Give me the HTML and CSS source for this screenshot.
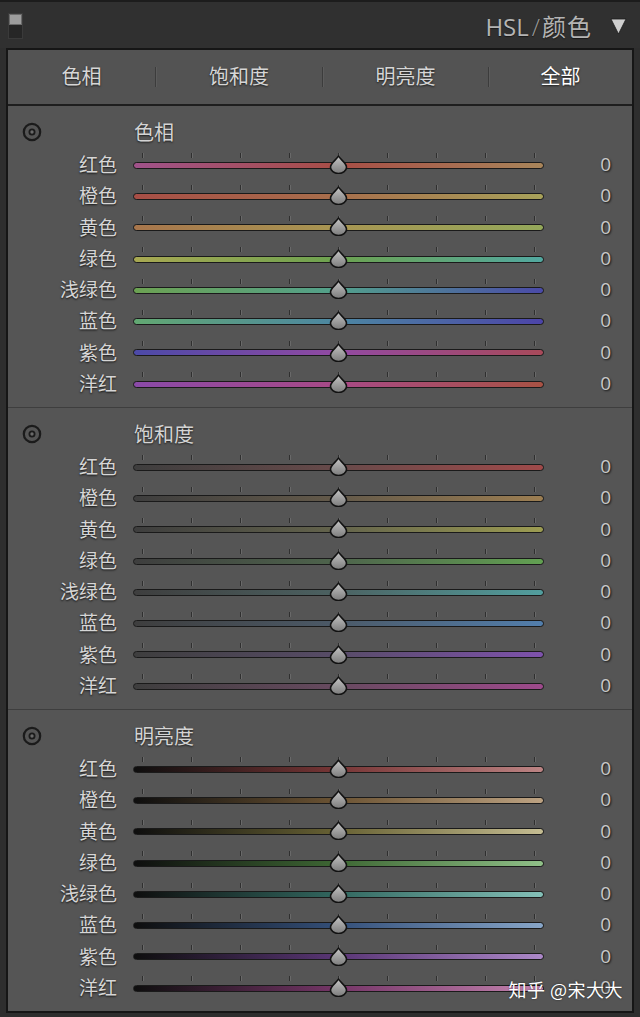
FILE: index.html
```html
<!DOCTYPE html>
<html lang="zh">
<head>
<meta charset="utf-8">
<title>HSL / 颜色</title>
<link rel="stylesheet" href="styles.css">
</head>
<body>
<div class="app">
  <div class="header">
    <div class="switch"><span class="switch-top"></span></div>
    <div class="title"><span>HSL</span><span class="slash">/</span><span>颜色</span></div>
    <svg class="collapse" width="17" height="18" viewBox="0 0 17 18"><polygon points="1,2 16,2 8.5,17" fill="#cfcfcf" stroke="#1a1a1a" stroke-width="0.8"/></svg>
  </div>
  <div class="panel">
    <div class="tabs">
      <div class="tab t1">色相</div><div class="sep"></div>
      <div class="tab t2">饱和度</div><div class="sep"></div>
      <div class="tab t3">明亮度</div><div class="sep"></div>
      <div class="tab t4 active">全部</div>
    </div>
    <div id="sections"></div>
  </div>
  <div class="watermark">知乎 @宋大大</div>
</div>
<script src="app.js"></script>
</body>
</html>
```
FILE: styles.css
```css
* { box-sizing: border-box; }
html, body { margin: 0; padding: 0; }
body {
  background: #2e2e2e;
  font-family: "Noto Sans CJK SC", "Noto Sans", sans-serif;
  width: 640px;
  height: 1017px;
  overflow: hidden;
}
.app { position: relative; width: 640px; height: 1017px; }
.header {
  height: 48px;
  background: #303030;
  border-top: 2px solid #1c1c1c;
  display: flex;
  align-items: center;
  padding: 0 13px 0 8px;
}
.switch {
  width: 15px; height: 26px;
  background: #262626;
  border: 1px solid #3a3a3a;
  margin-top: 2px;
}
.switch-top { display: block; height: 11px; background: #9d9d9d; border: 1px solid #6a6a6a; }
.title {
  margin-left: auto;
  color: #b4b4b4;
  font-size: 24px;
  line-height: 28px;
  margin-top: 2px;
  display: flex;
  align-items: baseline;
  font-family: "Open Sans", "Noto Sans CJK SC", sans-serif;
  text-shadow: 0 1px 1px rgba(0,0,0,0.5);
}
.title .slash { font-weight: 300; margin: 0 2px 0 3px; color: #9a9a9a; }
.title span:last-child { font-family: "Noto Sans CJK SC", sans-serif; letter-spacing: 1px; }
.collapse { margin-left: 18px; margin-top: 2px; }
.panel {
  margin: 0 6px;
  border: 2px solid #161616;
  background: #555555;
}
.tabs {
  height: 56px;
  display: flex;
  align-items: center;
  border-bottom: 2px solid #1e1e1e;
  background: #535353;
}
.tab {
  text-align: center;
  color: #d6d6d6;
  font-size: 20px;
  line-height: 24px;
  margin-top: -2px;
  text-shadow: 0 1px 2px rgba(0,0,0,0.7);
}
.tab.t1 { width: 147px; }
.tab.t2 { width: 166px; }
.tab.t3 { width: 165px; }
.tab.t4 { flex: 1; }
.tab.active { color: #ffffff; }
.sep { width: 1px; height: 20px; background: #3c3c3c; box-shadow: 1px 0 0 #5c5c5c; }
.section {
  height: 301px;
  padding-top: 14px;
}
.section + .section {
  height: 302px;
  border-top: 1px solid #3e3e3e;
}
.section-head {
  display: grid;
  grid-template-columns: 125px 1fr;
  height: 24px;
  align-items: center;
  margin-bottom: 4.35px;
}
.target { margin-left: 14px; display: block; }
.section-title {
  color: #d4d4d4;
  font-size: 20px;
  line-height: 24px;
  margin-left: 1px;
  text-shadow: 0 1px 2px rgba(0,0,0,0.7);
}
.row {
  display: grid;
  grid-template-columns: 108px 411px 1fr;
  column-gap: 17px;
  height: 31.3px;
  align-items: center;
}
.label {
  text-align: right;
  color: #d6d6d6;
  font-size: 19px;
  line-height: 22px;
  margin-right: -1px;
  text-shadow: 0 1px 2px rgba(0,0,0,0.8);
}
.slider { position: relative; height: 31.3px; }
.ticks {
  display: flex;
  justify-content: space-between;
  padding: 5px 9px 0;
  height: 10px;
}
.tick { width: 1px; height: 5px; background: #2f2f2f; box-shadow: 1px 0 0 rgba(255,255,255,0.12); }
.track {
  margin-top: 3.3px;
  height: 7px;
  border-radius: 3.5px;
  border: 1px solid #1a1a1a;
}
.thumb {
  position: absolute;
  left: 196px;
  top: 6.5px;
}
.value {
  text-align: right;
  padding-right: 21px;
  color: #c8c8c8;
  font-family: "Open Sans", sans-serif;
  font-size: 19px;
  text-shadow: 1px 1px 2px rgba(0,0,0,0.8);
}
.watermark {
  position: absolute;
  right: 17px;
  top: 977px;
  color: #ffffff;
  font-size: 18px;
  line-height: 24px;
  letter-spacing: 0.5px;
  text-shadow: 0 0 2px rgba(0,0,0,0.6);
}
```
FILE: app.js
```js
var names = ["红色","橙色","黄色","绿色","浅绿色","蓝色","紫色","洋红"];
var hue = [
  ["#a0528a","#a84e46","#a8855a"],
  ["#a84e46","#a86f4c","#a8a25a"],
  ["#a8764c","#a89652","#94a85a"],
  ["#a8a852","#6ca250","#52a8a0"],
  ["#6ca252","#52a08c","#4a4aa8"],
  ["#62a872","#4c86a2","#4c44a8"],
  ["#4c4aa8","#924aa2","#a84a5a"],
  ["#8a4aa8","#a84a86","#a85244"]
];
var sat = ["#a04a4a","#9c7e52","#9c9c52","#62a052","#529e9e","#527eac","#7e52ac","#9e4a8c"];
var satMid = ["#684a4a","#645a4a","#64644c","#4e644c","#4c6262","#4c5a68","#584c68","#684a60"];
var lum = [["#783636","#bc8484"],["#6c5434","#bca282"],["#686234","#c4bc92"],["#3e6834","#90c088"],["#326860","#84c0b8"],["#34507a","#88a6c8"],["#5a3676","#ac88c8"],["#763668","#c484b0"]];
var sections = [
  {title:"色相", grad:function(i){return "linear-gradient(90deg,"+hue[i][0]+","+hue[i][1]+" 50%,"+hue[i][2]+")";}},
  {title:"饱和度", grad:function(i){return "linear-gradient(90deg,#3e3e3e,"+satMid[i]+" 50%,"+sat[i]+")";}},
  {title:"明亮度", grad:function(i){return "linear-gradient(90deg,#0e0e0e,"+lum[i][0]+" 50%,"+lum[i][1]+")";}}
];
var thumbSvg = '<svg width="19" height="19" viewBox="0 0 19 19"><defs><linearGradient id="tg" x1="0" y1="0" x2="0" y2="1"><stop offset="0" stop-color="#c4c4c4"/><stop offset="1" stop-color="#7c7c7c"/></linearGradient></defs><path d="M9.5 1 C11.2 4.5 17.5 8 17.5 12.3 A8 6.2 0 0 1 1.5 12.3 C1.5 8 7.8 4.5 9.5 1 Z" fill="url(#tg)" stroke="#121212" stroke-width="1.6" stroke-linejoin="round"/></svg>';
var target = '<svg class="target" width="20" height="20" viewBox="0 0 20 20"><circle cx="10" cy="10" r="8.2" fill="none" stroke="#1b1b1b" stroke-width="2.2"/><circle cx="10" cy="10" r="2.6" fill="#6a6a6a" stroke="#1b1b1b" stroke-width="1.8"/></svg>';
var html = "";
sections.forEach(function(s){
  html += '<div class="section"><div class="section-head">'+target+'<div class="section-title">'+s.title+'</div></div>';
  names.forEach(function(n,i){
    var ticks = "";
    for (var k=0;k<9;k++) ticks += '<span class="tick"></span>';
    html += '<div class="row"><div class="label">'+n+'</div><div class="slider"><div class="ticks">'+ticks+'</div><div class="track" style="background:'+s.grad(i)+'"></div><div class="thumb">'+thumbSvg+'</div></div><div class="value">0</div></div>';
  });
  html += '</div>';
});
document.getElementById("sections").innerHTML = html;
```
